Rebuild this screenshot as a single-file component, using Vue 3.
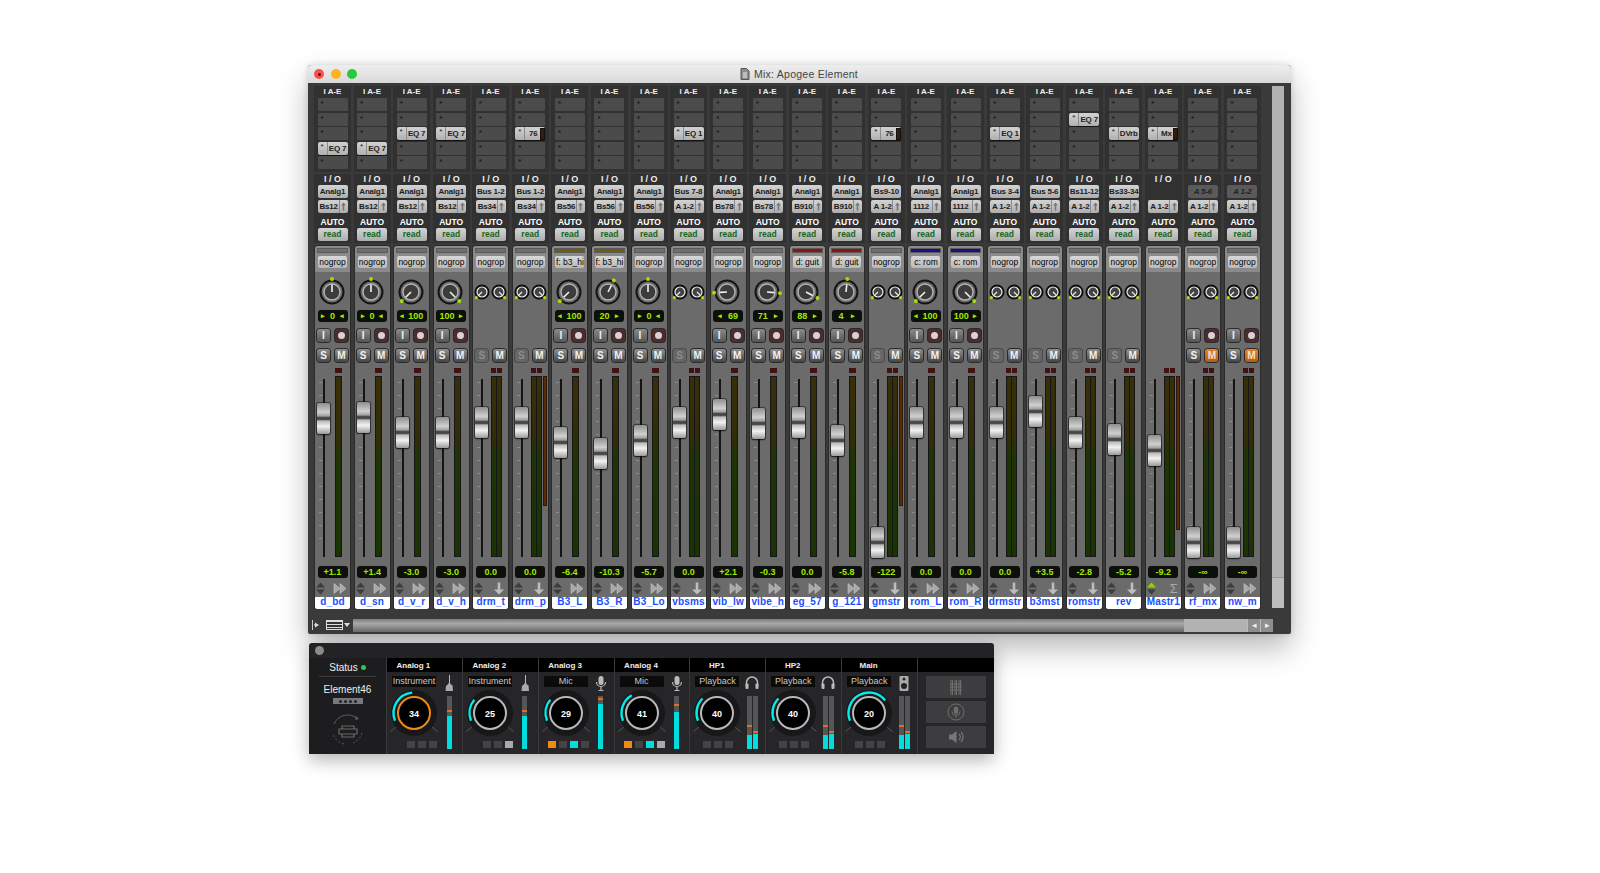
<template>
  <div class="page">
    <section class="mix">
      <header class="mix-title">
        <div class="lights">
          <span class="light red"><i></i></span>
          <span class="light yellow"></span>
          <span class="light green"></span>
        </div>
        <div class="mix-name">
          <svg width="10" height="12" viewBox="0 0 10 12"><path d="M1 .5h5.500L9 3v8.500H1z" fill="#8d8d8d" stroke="#555" /><path d="M3 5h4M3 7h4M3 9h4" stroke="#eee" /></svg>
          <span>Mix: Apogee Element</span>
        </div>
      </header>

      <div class="mix-body">
        <div class="strips">
          <div v-for="s in strips" :key="s.name" class="strip">
            <div class="box inserts">
              <div class="head">I A-E</div>
              <div v-for="n in 5" :key="n" class="slot" :class="{ on: s.ins && s.ins[0] === n - 1 }">
                <template v-if="s.ins && s.ins[0] === n - 1">
                  <span class="star">*</span>
                  <span class="plug">{{ s.ins[1] }}</span>
                  <span v-if="s.ins[2]" class="plug-bar"></span>
                </template>
                <span v-else class="dot">*</span>
              </div>
            </div>

            <div class="box io">
              <div class="head">I / O</div>
              <div class="io-btn" :class="{ none: !s.i, off: s.off }">{{ s.i }}</div>
              <div class="io-btn out">
                <span class="out-name">{{ s.o }}</span>
                <span class="out-arrow">
                  <svg width="7" height="9" viewBox="0 0 7 9"><path d="M3.500 .5 6 3.500H4.300V8.500H2.700V3.500H1z" fill="#777" /></svg>
                </span>
              </div>
              <div class="head auto">AUTO</div>
              <div class="io-btn read">read</div>
            </div>

            <div class="panel">
              <div class="group">
                <span class="group-bar" :style="{ background: s.gc || '#6f6f6f' }"></span>
                <span class="group-btn">{{ s.g || 'nogrop' }}</span>
              </div>

              <div class="pan-row">
                <svg v-if="s.pan" width="30" height="32" viewBox="0 0 30 32" class="pan-knob">
                  <circle cx="15" cy="16" r="12.500" fill="#141414" />
                  <circle cx="15" cy="16" r="10.500" fill="#6a6a6a" />
                  <circle cx="15" cy="16" r="8" fill="#3c3c3c" stroke="#b4b4b4" stroke-width="1.400" />
                  <g :transform="`rotate(${s.pan[0]} 15 16)`">
                    <path d="M15 16V8.500" stroke="#f2f2f2" stroke-width="1.600" />
                    <circle cx="15" cy="3" r="2" fill="#9fe000" />
                  </g>
                </svg>
                <template v-else-if="s.st">
                  <svg v-for="a in [-135, 135]" :key="a" width="18" height="20" viewBox="0 0 18 20" class="pan-small">
                    <circle cx="9" cy="10" r="7.500" fill="#0d0d0d" />
                    <circle cx="9" cy="10" r="5" fill="#444" stroke="#eee" stroke-width="1.200" />
                    <g :transform="`rotate(${a} 9 10)`">
                      <path d="M9 10V5.500" stroke="#f2f2f2" stroke-width="1.200" />
                      <circle cx="9" cy="2" r="1.600" fill="#9fe000" />
                    </g>
                  </svg>
                </template>
              </div>

              <div class="pan-value">
                <div v-if="s.pan" class="lcd pan-lcd">
                  <span v-if="s.pan[2] !== 'r'" class="tri">{{ s.pan[2] === 'c' ? '▸' : '◂' }}</span>
                  <span>{{ s.pan[1] }}</span>
                  <span v-if="s.pan[2] !== 'l'" class="tri">{{ s.pan[2] === 'c' ? '◂' : '▸' }}</span>
                </div>
              </div>

              <div class="btn-row rec-row">
                <template v-if="s.rec">
                  <span class="btn input">I</span>
                  <span class="btn rec"><i></i></span>
                </template>
              </div>

              <div class="btn-row sm-row">
                <template v-if="s.kind !== 'master'">
                  <span class="btn" :class="{ dim: s.kind === 'aux' }">S</span>
                  <span class="btn" :class="{ mute: s.muted }">M</span>
                </template>
              </div>

              <div class="fader-area" :class="{ wide: s.st || s.kind === 'master' }">
                <div class="fader">
                  <span class="track"></span>
                  <span class="ticks"></span>
                  <span class="cap" :style="{ top: s.y - 368 - 15.5 + 'px' }"></span>
                </div>
                <div class="meter-col">
                  <div class="peaks">
                    <i></i><i v-if="s.st || s.kind === 'master'"></i>
                  </div>
                  <div class="meters">
                    <span class="meter"></span>
                    <span v-if="s.st || s.kind === 'master'" class="meter"></span>
                    <span v-if="s.gr" class="gain" :style="{ height: s.gr + 'px' }"></span>
                  </div>
                </div>
              </div>

              <div class="vol-row"><div class="lcd">{{ s.vol }}</div></div>

              <div class="icons-row">
                <svg width="11" height="13" viewBox="0 0 11 13">
                  <path d="M5.500 .5 10 5.500H1z" :fill="s.kind === 'master' ? '#8fd400' : '#3d3d3d'" />
                  <path d="M1 7.500h9L5.500 12.500z" fill="#3d3d3d" />
                </svg>
                <svg v-if="s.kind === 'audio'" width="14" height="13" viewBox="0 0 14 13">
                  <path d="M1 1.500 7 6.500 1 11.500zM7 1.500 13 6.500 7 11.500z" fill="#a8a8a8" stroke="#c8c8c8" stroke-width=".6" />
                </svg>
                <svg v-else-if="s.kind === 'aux'" width="12" height="13" viewBox="0 0 12 13">
                  <path d="M4.700 .5h2.600v7H11L6 12.500 1 7.500h3.700z" fill="#bdbdbd" />
                </svg>
                <span v-else class="sigma">Σ</span>
              </div>

              <div class="name">{{ s.name }}</div>
            </div>
          </div>
        </div>
        <div class="vscroll"><span></span></div>
      </div>

      <div class="mix-foot">
        <svg width="12" height="12" viewBox="0 0 12 12"><path d="M1.500 1v10" stroke="#ccc" /><path d="M4 3.500 8 6 4 8.500z M3 5.500h2v1H3z" fill="#ddd" /></svg>
        <span class="foot-view"></span>
        <span class="foot-caret"></span>
        <div class="hscroll">
          <span class="thumb"></span>
          <span class="hs-rest"></span>
          <span class="hs-arrow">◂</span>
          <span class="hs-arrow">▸</span>
        </div>
      </div>
    </section>

    <section class="element">
      <header class="el-title"><span></span></header>
      <div class="el-body">
        <aside class="el-status">
          <div class="status"><span>Status</span><i></i></div>
          <div class="el-name">Element46</div>
          <div class="el-dev"><i v-for="n in 4" :key="n"></i></div>
          <svg width="34" height="34" viewBox="0 0 34 34" class="el-logo">
            <path d="M27 6A15 15 0 0 0 3 11" fill="none" stroke="#5d5d5d" stroke-width="1" />
            <path d="M31 20a15 15 0 0 1-9 10M13 31A15 15 0 0 1 2 21" fill="none" stroke="#5d5d5d" stroke-dasharray="2 2" />
            <path d="M11 13h12v3h3v5h-3v3H11v-3H8v-5h3z M8 16h18M8 21h18" fill="none" stroke="#6a6a6a" stroke-width="1.200" />
            <path d="M25 3l3 3-4 1z" fill="#5d5d5d" />
          </svg>
        </aside>

        <div v-for="c in channels" :key="c.name" class="el-col">
          <div class="el-head">{{ c.name }}</div>
          <div class="el-main">
            <div class="el-left">
              <div class="el-select">{{ c.src }}</div>
              <svg width="60" height="56" viewBox="0 0 60 56" class="el-knob">
                <circle cx="30" cy="28" r="23" fill="#18181a" />
                <path :d="tick(-128)" stroke="#555" />
                <path :d="tick(128)" stroke="#555" />
                <path :d="arc(c.end)" fill="none" stroke="#0ee" stroke-width="2.400" />
                <circle cx="30" cy="28" r="16" fill="#000" :stroke="c.hot ? '#f08a14' : '#b9b9b9'" stroke-width="2" />
                <text x="30" y="31.500" text-anchor="middle" class="el-val">{{ c.val }}</text>
              </svg>
              <div class="el-squares" :class="c.pad">
                <i v-for="(q, i) in c.sq" :key="i" :class="q"></i>
              </div>
            </div>
            <div class="el-right">
              <svg v-if="c.icon === 'guitar'" width="12" height="17" viewBox="0 0 12 17" class="el-icon">
                <path d="M6.500 0v9" stroke="#bbb" stroke-width="1" />
                <path d="M5.800 8h1.400l.6 1.500 1.700.8.500 5.700H2.500l.5-5 1.800-1.500z" fill="#aaa" />
              </svg>
              <svg v-else-if="c.icon === 'mic'" width="12" height="17" viewBox="0 0 12 17" class="el-icon">
                <rect x="3.500" y="1" width="5" height="9" rx="2.500" fill="#bbb" />
                <path d="M1.500 7a4.500 4.500 0 0 0 9 0M6 12v3M3.500 15.500h5" fill="none" stroke="#bbb" stroke-width="1.200" />
              </svg>
              <svg v-else-if="c.icon === 'phones'" width="14" height="17" viewBox="0 0 14 17" class="el-icon">
                <path d="M1.500 11V7.500a5.500 5.500 0 0 1 11 0V11" fill="none" stroke="#bbb" stroke-width="1.500" />
                <rect x=".5" y="8.500" width="3" height="5.500" rx="1" fill="#bbb" />
                <rect x="10.500" y="8.500" width="3" height="5.500" rx="1" fill="#bbb" />
              </svg>
              <svg v-else width="10" height="17" viewBox="0 0 10 17" class="el-icon">
                <rect x=".5" y="1" width="9" height="15" rx="1" fill="#aaa" />
                <circle cx="5" cy="4" r="1.500" fill="#222" />
                <circle cx="5" cy="11" r="3" fill="#222" />
              </svg>
              <div class="el-meters" :class="{ stereo: c.m.length > 1 }">
                <div v-for="(m, i) in c.m" :key="i" class="el-meter">
                  <b :style="{ top: m[0] + 'px' }"></b>
                  <u :style="{ height: m[1] + 'px' }"></u>
                </div>
              </div>
            </div>
          </div>
        </div>

        <aside class="el-side">
          <div class="el-side-head"></div>
          <div class="el-side-btns">
            <div class="el-btn">
              <svg width="12" height="15" viewBox="0 0 12 15"><path d="M1 0v15M2.500 0v15M5 0v15M6.500 0v15M9 0v15M10.500 0v15M0 4h12M0 7h12M0 10h12" stroke="#6d6d6d" /></svg>
            </div>
            <div class="el-btn">
              <svg width="18" height="18" viewBox="0 0 18 18"><circle cx="9" cy="9" r="8" fill="none" stroke="#6d6d6d" /><rect x="6.800" y="3.500" width="4.400" height="7.500" rx="2.200" fill="#6d6d6d" /><path d="M5 8.500a4 4 0 0 0 8 0M9 12.500v2.500" fill="none" stroke="#6d6d6d" /></svg>
            </div>
            <div class="el-btn">
              <svg width="16" height="14" viewBox="0 0 16 14"><path d="M1 4.500h3L8.500 1v12L4 9.500H1z" fill="#777" /><path d="M11 4a4 4 0 0 1 0 6M13 2a7 7 0 0 1 0 10" fill="none" stroke="#777" stroke-width="1.200" /></svg>
            </div>
          </div>
        </aside>
      </div>
    </section>
  </div>
</template>

<script setup>
const OLIVE = '#6d5c12';
const RED = '#8e1414';
const NAVY = '#1b1083';

const mono = (name, ins, i, o, pan, vol, y, extra = {}) => ({
  name, ins, i, o, pan, vol, y, rec: true, kind: 'audio', ...extra,
});
const aux = (name, ins, i, vol, y, extra = {}) => ({
  name, ins, i, o: 'A 1-2', vol, y, st: true, kind: 'aux', ...extra,
});

const strips = [
  mono('d_bd', [3, 'EQ 7'], 'Analg1', 'Bs12', [0, '0', 'c'], '+1.1', 418),
  mono('d_sn', [3, 'EQ 7'], 'Analg1', 'Bs12', [0, '0', 'c'], '+1.4', 417),
  mono('d_v_r', [2, 'EQ 7'], 'Analg1', 'Bs12', [-135, '100', 'l'], '-3.0', 432),
  mono('d_v_h', [2, 'EQ 7'], 'Analg1', 'Bs12', [135, '100', 'r'], '-3.0', 432),
  aux('drm_t', null, 'Bus 1-2', '0.0', 422, { o: 'Bs34' }),
  aux('drm_p', [2, '76', true], 'Bus 1-2', '0.0', 422, { o: 'Bs34', gr: 130 }),
  mono('B3_L', null, 'Analg1', 'Bs56', [-135, '100', 'l'], '-6.4', 442, { g: 'f: b3_hi', gc: OLIVE }),
  mono('B3_R', null, 'Analg1', 'Bs56', [27, '20', 'r'], '-10.3', 453, { g: 'f: b3_hi', gc: OLIVE }),
  mono('B3_Lo', null, 'Analg1', 'Bs56', [0, '0', 'c'], '-5.7', 440),
  aux('vbsms', [2, 'EQ 1'], 'Bus 7-8', '0.0', 422),
  mono('vib_lw', null, 'Analg1', 'Bs78', [-93, '69', 'l'], '+2.1', 414),
  mono('vibe_h', null, 'Analg1', 'Bs78', [95, '71', 'r'], '-0.3', 423),
  mono('eg_57', null, 'Analg1', 'B910', [118, '88', 'r'], '0.0', 422, { g: 'd: guit', gc: RED }),
  mono('g_121', null, 'Analg1', 'B910', [6, '4', 'r'], '-5.8', 440, { g: 'd: guit', gc: RED }),
  aux('gmstr', [2, '76', true], 'Bs9-10', '-122', 542, { gr: 130 }),
  mono('rom_L', null, 'Analg1', '1112', [-135, '100', 'l'], '0.0', 422, { g: 'c: rom', gc: NAVY }),
  mono('rom_R', null, 'Analg1', '1112', [135, '100', 'r'], '0.0', 422, { g: 'c: rom', gc: NAVY }),
  aux('drmstr', [2, 'EQ 1'], 'Bus 3-4', '0.0', 422),
  aux('b3mst', null, 'Bus 5-6', '+3.5', 411),
  aux('romstr', [1, 'EQ 7'], 'Bs11-12', '-2.8', 432),
  aux('rev', [2, 'DVrb'], 'Bs33-34', '-5.2', 439),
  { name: 'Mastr1', ins: [2, 'Mx', true], i: '', o: 'A 1-2', vol: '-9.2', y: 450, kind: 'master', gr: 154 },
  { name: 'rf_mx', ins: null, i: 'A 5-6', off: true, o: 'A 1-2', vol: '-∞', y: 542, st: true, rec: true, muted: true, kind: 'audio' },
  { name: 'nw_m', ins: null, i: 'A 1-2', off: true, o: 'A 1-2', vol: '-∞', y: 542, st: true, rec: true, muted: true, kind: 'audio' },
];

const OFF3 = ['', '', ''];
const channels = [
  { name: 'Analog 1', src: 'Instrument', icon: 'guitar', val: 34, end: -5, hot: true, sq: OFF3, m: [[14, 33]] },
  { name: 'Analog 2', src: 'Instrument', icon: 'guitar', val: 25, end: -50, sq: ['', '', 'lit'], m: [[14, 33]] },
  { name: 'Analog 3', src: 'Mic', icon: 'mic', val: 29, end: -50, sq: ['org', '', 'cy', ''], m: [[2, 45]] },
  { name: 'Analog 4', src: 'Mic', icon: 'mic', val: 41, end: -30, sq: ['org', '', 'cy', 'lit'], m: [[8, 37]] },
  { name: 'HP1', src: 'Playback', icon: 'phones', val: 40, end: -45, pad: 'hp', sq: OFF3, m: [[29, 14], [35, 15]] },
  { name: 'HP2', src: 'Playback', icon: 'phones', val: 40, end: -45, pad: 'hp', sq: OFF3, m: [[29, 14], [35, 15]] },
  { name: 'Main', src: 'Playback', icon: 'speaker', val: 20, end: 52, pad: 'hp', sq: OFF3, m: [[29, 14], [35, 15]] },
];

const polar = (r, deg) => {
  const a = (deg * Math.PI) / 180;
  return `${(30 + r * Math.sin(a)).toFixed(2)} ${(28 - r * Math.cos(a)).toFixed(2)}`;
};
const arc = (end) => {
  const start = -112;
  const large = end - start > 180 ? 1 : 0;
  return `M${polar(20.5, start)}A20.500 20.500 0 ${large} 1 ${polar(20.5, end)}`;
};
const tick = (deg) => `M${polar(23, deg)}L${polar(30, deg)}`;
</script>

<style>
html, body { background: #fff; }
</style>

<style scoped>
.page {
  width: 1600px;
  height: 873px;
  box-sizing: border-box;
  padding: 65px 0 0 308px;
  background: #fff;
  overflow: hidden;
  font-family: "Liberation Sans", Arial, sans-serif;
}

.mix {
  width: 983px;
  height: 569px;
  border-radius: 4px 4px 2px 2px;
  background: #3a3a3a;
  box-shadow: 0 14px 30px rgba(0, 0, 0, .28), 0 0 6px rgba(0, 0, 0, .15);
  display: flex;
  flex-direction: column;
}
.mix-title {
  height: 18px;
  flex: none;
  display: flex;
  align-items: center;
  padding-left: 6px;
  background: linear-gradient(#eeeeee, #d9d9d9);
  border-radius: 4px 4px 0 0;
}
.lights { display: flex; gap: 6.500px; }
.light {
  width: 10px;
  height: 10px;
  border-radius: 50%;
  display: flex;
  align-items: center;
  justify-content: center;
}
.light i { width: 3px; height: 3px; border-radius: 50%; background: #5a0f0c; }
.red { background: #fc4e48; }
.yellow { background: #fdb125; }
.green { background: #27c93f; }
.mix-name {
  flex: 1;
  display: flex;
  justify-content: center;
  align-items: center;
  gap: 4px;
  font-size: 10.500px;
  color: #444;
  margin-right: 50px;
  letter-spacing: .25px;
}

.mix-body {
  flex: none;
  display: flex;
  padding: 3px 0 0 7px;
  height: 522px;
}
.strips {
  width: 949.7px;
  display: grid;
  grid-template-columns: repeat(24, 39.57px);
  flex: none;
}
.strip {
  width: 35px;
  display: flex;
  flex-direction: column;
}
.box { background: #313131; margin: 0 -1px; padding: 0 1px; }
.head {
  height: 12px;
  line-height: 12px;
  font-size: 8px;
  font-weight: 700;
  text-align: center;
  color: #eee;
}
.inserts { height: 86px; }
.slot {
  width: 30px;
  height: 13px;
  margin: 0 auto 1.600px;
  background: #4b4b4b;
  border-radius: 1px;
  display: flex;
  align-items: center;
  font-size: 8px;
  color: #1c1c1c;
  box-sizing: border-box;
}
.slot .dot { margin-left: 3px; line-height: 8px; font-weight: 700; margin-top: -1px; }
.slot.on {
  background: linear-gradient(#d2d2d2, #b0b0b0);
  box-shadow: 0 1px 1px #111;
  border-radius: 2px;
}
.star {
  width: 9px;
  text-align: center;
  height: 100%;
  border-right: 1px solid #8c8c8c;
  line-height: 10px;
  flex: none;
}
.plug {
  flex: 1;
  text-align: center;
  font-size: 8px;
  font-weight: 700;
  letter-spacing: -.2px;
  color: #222;
  white-space: nowrap;
}
.plug-bar {
  width: 3px;
  height: 10px;
  margin-right: 1px;
  background: #3a1c05;
  outline: 1px solid #111;
}
.io {
  margin-top: 2px;
  height: 69px;
}
.io .head { height: 10px; line-height: 10px; margin-bottom: 1px; font-size: 9px; }
.io .head.auto { height: 12px; margin: 3px 0 0; line-height: 12px; color: #fff; font-size: 8.500px; }
.io-btn {
  width: 30px;
  height: 13px;
  margin: 0 auto;
  box-sizing: border-box;
  background: linear-gradient(#d4d4d4, #adadad);
  border-radius: 2px;
  font-size: 8px;
  line-height: 13px;
  font-weight: 700;
  text-align: center;
  color: #1c1c1c;
  white-space: nowrap;
  letter-spacing: -.2px;
}
.io-btn.none { background: transparent; }
.io-btn.off {
  background: #5a5a5a;
  color: #222;
  font-style: italic;
}
.io-btn.out {
  margin-top: 2px;
  display: flex;
  text-align: left;
}
.out-name { flex: 1; padding-left: 2px; }
.out-arrow {
  width: 8px;
  border-left: 1px solid #8c8c8c;
  display: flex;
  align-items: center;
  justify-content: center;
}
.io-btn.read {
  font-size: 8.500px;
  color: #14661a;
  letter-spacing: 0;
}

.panel {
  margin-top: 3px;
  height: 362px;
  background: #6b6b6b;
  border-radius: 3px 3px 0 0;
  display: flex;
  flex-direction: column;
  box-shadow: 0 0 0 1px #2b2b2b;
}
.group {
  height: 26px;
  flex: none;
  background: #8a8a8a;
  border-radius: 3px 3px 0 0;
  box-sizing: border-box;
  padding-top: 3px;
  display: flex;
  flex-direction: column;
  align-items: center;
}
.group-bar {
  width: 29px;
  height: 3px;
  box-shadow: 0 0 0 1px #5b5b5b;
}
.group-btn {
  width: 29px;
  height: 12px;
  margin-top: 4px;
  background: linear-gradient(#d8d8d8, #b8b8b8);
  border-radius: 2px;
  font-size: 8.500px;
  line-height: 12px;
  text-align: center;
  color: #000;
  white-space: nowrap;
}
.pan-row {
  height: 38px;
  flex: none;
  display: flex;
  justify-content: center;
  align-items: center;
}
.pan-knob { display: block; margin: 2px 0 0 -2px; }
.pan-small { display: block; margin: 2px -.5px 0; }
.pan-value {
  height: 12px;
  flex: none;
  display: flex;
  justify-content: center;
}
.lcd {
  width: 30px;
  height: 12px;
  background: #0c0f0a;
  border-radius: 3px;
  font-size: 9px;
  font-weight: 700;
  line-height: 12px;
  text-align: center;
  color: #a4e800;
  display: flex;
  justify-content: center;
  gap: 1px;
  white-space: nowrap;
}
.pan-lcd { justify-content: space-evenly; }
.tri { font-size: 7px; }
.btn-row {
  flex: none;
  display: flex;
  justify-content: space-between;
  padding: 0 2px;
  box-sizing: border-box;
  height: 13px;
}
.rec-row { margin-top: 7px; }
.sm-row { margin-top: 7px; }
.btn {
  width: 13px;
  height: 13px;
  box-sizing: border-box;
  border-radius: 3px;
  background: linear-gradient(#909090, #444);
  box-shadow: 0 0 0 1px #2a2a2a;
  color: #f2f2f2;
  font-size: 10px;
  font-weight: 700;
  line-height: 13px;
  text-align: center;
}
.btn.dim { background: #666; color: #8d8d8d; box-shadow: 0 0 0 1px #4b4b4b; }
.btn.mute { background: linear-gradient(#e8842c, #b85a10); color: #f6e2cc; }
.btn.input { background: linear-gradient(#8a8a8a, #555); }
.btn.rec {
  background: #4c2c2e;
  display: flex;
  align-items: center;
  justify-content: center;
}
.btn.rec i { width: 7px; height: 7px; border-radius: 50%; background: #d9d2d2; }
.fader-area {
  height: 189px;
  margin-top: 6px;
  flex: none;
  display: flex;
  gap: 4px;
}
.fader-area.wide { gap: 2px; }
.fader {
  width: 16px;
  position: relative;
  flex: none;
}
.track {
  position: absolute;
  left: 8px;
  top: 11px;
  bottom: 0;
  width: 2px;
  background: #151515;
}
.ticks {
  position: absolute;
  left: 4px;
  top: 14px;
  bottom: 6px;
  width: 3px;
  background: repeating-linear-gradient(#8c8c8c 0 1px, transparent 1px 13px);
}
.cap {
  position: absolute;
  left: 2px;
  width: 13px;
  height: 31px;
  border-radius: 2px;
  background: linear-gradient(#8f8f8f 0, #d0d0d0 30%, #a0a0a0 42%, #484848 47%, #484848 53%, #bbb 58%, #f2f2f2 75%, #9a9a9a 100%);
  box-shadow: 0 1px 2px rgba(0, 0, 0, .6), 0 0 0 1px rgba(20, 20, 20, .55);
}
.meter-col { display: flex; flex-direction: column; }
.peaks {
  height: 5px;
  display: flex;
  gap: 1px;
}
.peaks i { width: 7px; background: #401212; }
.wide .peaks i { width: 5px; }
.meters {
  margin-top: 3px;
  height: 181px;
  display: flex;
  align-items: flex-start;
}
.meter {
  width: 7px;
  height: 100%;
  box-sizing: border-box;
  border: 1px solid #161616;
  background: linear-gradient(#362f0a 0, #322d09 33%, #1f3307 45%, #1a3305 100%);
}
.wide .meter { width: 6px; }
.wide .meter + .meter { margin-left: -1px; }
.gain {
  width: 4px;
  margin-left: 1px;
  background: #5c2a06;
  box-sizing: border-box;
  border: 1px solid #2b1a0a;
}
.vol-row {
  height: 12px;
  margin-top: 9px;
  flex: none;
  display: flex;
  justify-content: center;
}
.icons-row {
  height: 17px;
  margin-top: 2px;
  flex: none;
  display: flex;
  justify-content: space-between;
  align-items: center;
  padding: 0 3px 0 0;
}
.sigma { color: #a8a8a8; font-size: 13px; line-height: 13px; }
.name {
  height: 12px;
  flex: none;
  background: #fff;
  color: #1a50ff;
  font-size: 10px;
  font-weight: 700;
  line-height: 10px;
  text-align: center;
  white-space: nowrap;
  letter-spacing: .15px;
  border-radius: 0 0 2px 2px;
}
.vscroll {
  width: 12px;
  margin-left: 7.300px;
  background: #b2b2b2;
  height: 522px;
  display: flex;
  align-items: flex-end;
}
.vscroll span { display: block; width: 100%; height: 30px; background: #bdbdbd; border-top: 1px solid #999; }

.mix-foot {
  flex: 1;
  display: flex;
  align-items: flex-end;
  padding: 0 0 2px 3px;
}
.mix-foot svg { margin-bottom: 1px; }
.foot-view {
  width: 15px;
  height: 8px;
  margin: 0 0 2px 3px;
  border: 1px solid #ddd;
  background: repeating-linear-gradient(#ddd 0 1px, #333 1px 3px);
}
.foot-caret {
  width: 0;
  height: 0;
  margin: 0 3px 5px 1px;
  border: 3.500px solid transparent;
  border-top: 4px solid #ddd;
  border-bottom: 0;
}
.hscroll {
  width: 932px;
  height: 13px;
  display: flex;
}
.thumb {
  flex: 831px 0 0;
  background: linear-gradient(#7e7e7e, #a8a8a8 35%, #6a6a6a);
}
.hs-rest { flex: 63px 0 0; background: #b2b2b2; }
.hs-arrow {
  flex: 13px 0 0;
  background: #8e8e8e;
  border-left: 1px solid #bbb;
  box-sizing: border-box;
  color: #eee;
  font-size: 9px;
  line-height: 13px;
  text-align: center;
}

.element {
  width: 685px;
  height: 111px;
  margin: 9px 0 0 1px;
  background: #232325;
  border-radius: 3px;
  box-shadow: 0 6px 18px rgba(0, 0, 0, .3);
  display: flex;
  flex-direction: column;
  color: #eee;
}
.el-title {
  height: 15px;
  flex: none;
  display: flex;
  align-items: center;
  padding-left: 6px;
}
.el-title span {
  width: 9px;
  height: 9px;
  border-radius: 50%;
  background: #8b8b8b;
}
.el-body { flex: 1; display: flex; }
.el-status {
  width: 77px;
  flex: none;
  background: #1d1d1f;
  display: flex;
  flex-direction: column;
  align-items: center;
  box-sizing: border-box;
}
.status {
  width: 57px;
  height: 18px;
  border-bottom: 1px solid #3c3c3c;
  display: flex;
  align-items: center;
  justify-content: center;
  gap: 3px;
  font-size: 10px;
}
.status i { width: 5px; height: 5px; border-radius: 50%; background: #2fc84a; }
.el-name { font-size: 10px; margin-top: 7px; }
.el-dev {
  width: 30px;
  height: 6px;
  margin-top: 3px;
  background: #77777f;
  display: flex;
  align-items: center;
  justify-content: center;
  gap: 2px;
}
.el-dev i { width: 3px; height: 3px; background: #222; border-radius: 50%; }
.el-logo { display: block; margin-top: 9px; }
.el-col {
  width: 75.860px;
  flex: none;
  box-sizing: border-box;
  border-left: 1px solid #3a3a3c;
  display: flex;
  flex-direction: column;
}
.el-head {
  height: 14px;
  background: #000;
  font-size: 8px;
  line-height: 16px;
  width: 100%;
  padding-right: 22px;
  box-sizing: border-box;
  text-align: center;
  font-weight: 700;
}
.el-main { flex: 1; display: flex; padding: 4px 0 0 5px; background: #262628; }
.el-left { width: 44px; flex: none; }
.el-select {
  width: 44px;
  height: 11px;
  background: #0b0b0b;
  font-size: 9px;
  line-height: 11px;
  text-align: center;
  color: #c8c8c8;
}
.el-knob { display: block; margin: -2px -8px 0; }
.el-val { font: 700 9px "Liberation Sans", Arial, sans-serif; fill: #fff; }
.el-squares {
  display: flex;
  justify-content: flex-end;
  gap: 3px;
  height: 7px;
  margin-right: -1px;
}
.el-squares.hp { margin-right: 6px; }
.el-squares i { width: 8px; height: 7px; background: #434345; }
.el-squares .lit { background: #aaa; }
.el-squares .org { background: #f08a14; }
.el-squares .cy { background: #0dd; }
.el-right {
  width: 24px;
  display: flex;
  flex-direction: column;
  align-items: center;
  margin-left: 1px;
}
.el-icon { display: block; margin-top: -1px; height: 17px; }
.el-meters {
  margin-top: 4px;
  height: 53px;
  display: flex;
  gap: 1px;
}
.el-meter {
  width: 5px;
  height: 100%;
  background: #565658;
  position: relative;
  display: flex;
  align-items: flex-end;
}
.el-meter b { position: absolute; left: 0; right: 0; height: 1.500px; background: #e0701a; }
.el-meter u { display: block; width: 100%; background: #0dd; }
.el-side {
  flex: 1;
  display: flex;
  flex-direction: column;
  border-left: 1px solid #3a3a3c;
}
.el-side-head { height: 14px; background: #000; }
.el-side-btns {
  flex: 1;
  display: flex;
  flex-direction: column;
  gap: 3px;
  padding: 4px 8px 0;
  background: #262628;
}
.el-btn {
  height: 22px;
  background: #3d3d3f;
  display: flex;
  align-items: center;
  justify-content: center;
}
</style>
